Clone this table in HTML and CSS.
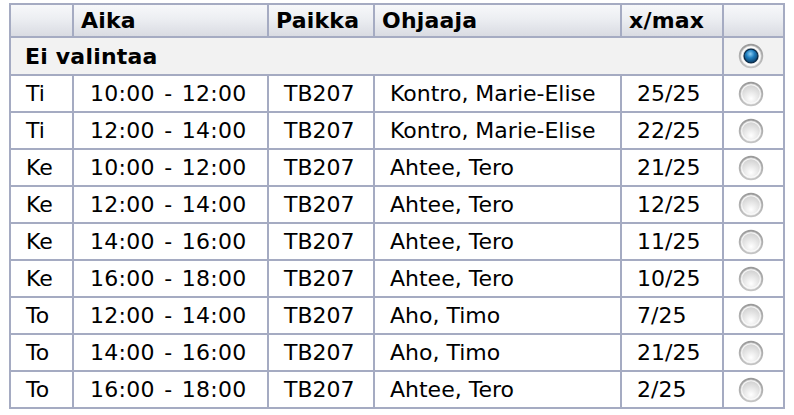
FILE: index.html
```html
<!DOCTYPE html>
<html lang="fi">
<head>
<meta charset="utf-8">
<title>Ryhmävalinta</title>
<link rel="stylesheet" href="styles.css">
</head>
<body>
<svg width="0" height="0" class="defs" aria-hidden="true">
  <defs>
    <radialGradient id="rfill" cx="50%" cy="70%" r="60%">
      <stop offset="0" stop-color="#ffffff"/>
      <stop offset="1" stop-color="#d0d0d0"/>
    </radialGradient>
    <linearGradient id="rring" x1="0" y1="0" x2="0" y2="1">
      <stop offset="0" stop-color="#9a9a9a"/>
      <stop offset="1" stop-color="#c4c4c4"/>
    </linearGradient>
    <radialGradient id="rdot" cx="45%" cy="35%" r="65%">
      <stop offset="0" stop-color="#8fd0f5"/>
      <stop offset="0.45" stop-color="#1f7fc0"/>
      <stop offset="1" stop-color="#0b3d66"/>
    </radialGradient>
  </defs>
</svg>
<table class="groups">
  <colgroup>
    <col class="c-day"><col class="c-time"><col class="c-room"><col class="c-teacher"><col class="c-count"><col class="c-radio">
  </colgroup>
  <thead>
    <tr><th></th><th>Aika</th><th>Paikka</th><th>Ohjaaja</th><th>x/max</th><th></th></tr>
  </thead>
  <tbody>
    <tr class="none"><td colspan="5">Ei valintaa</td><td class="radio"><svg class="rb" viewBox="0 0 24 24"><circle cx="12" cy="12" r="10.5" fill="url(#rfill)" stroke="url(#rring)" stroke-width="1.6"/><circle cx="12" cy="12" r="8.3" fill="none" stroke="#ffffff" stroke-width="1.2"/><circle cx="12" cy="12" r="6.4" fill="url(#rdot)" stroke="#0a2b48" stroke-width="1.2"/></svg></td></tr>
    <tr><td>Ti</td><td class="time">10:00 - 12:00</td><td>TB207</td><td>Kontro, Marie-Elise</td><td>25/25</td><td class="radio"><svg class="rb" viewBox="0 0 24 24"><circle cx="12" cy="12" r="10.5" fill="url(#rfill)" stroke="url(#rring)" stroke-width="1.6"/><circle cx="12" cy="12" r="8.6" fill="none" stroke="#ffffff" stroke-width="1" opacity="0.8"/></svg></td></tr>
    <tr><td>Ti</td><td class="time">12:00 - 14:00</td><td>TB207</td><td>Kontro, Marie-Elise</td><td>22/25</td><td class="radio"><svg class="rb" viewBox="0 0 24 24"><circle cx="12" cy="12" r="10.5" fill="url(#rfill)" stroke="url(#rring)" stroke-width="1.6"/><circle cx="12" cy="12" r="8.6" fill="none" stroke="#ffffff" stroke-width="1" opacity="0.8"/></svg></td></tr>
    <tr><td>Ke</td><td class="time">10:00 - 12:00</td><td>TB207</td><td>Ahtee, Tero</td><td>21/25</td><td class="radio"><svg class="rb" viewBox="0 0 24 24"><circle cx="12" cy="12" r="10.5" fill="url(#rfill)" stroke="url(#rring)" stroke-width="1.6"/><circle cx="12" cy="12" r="8.6" fill="none" stroke="#ffffff" stroke-width="1" opacity="0.8"/></svg></td></tr>
    <tr><td>Ke</td><td class="time">12:00 - 14:00</td><td>TB207</td><td>Ahtee, Tero</td><td>12/25</td><td class="radio"><svg class="rb" viewBox="0 0 24 24"><circle cx="12" cy="12" r="10.5" fill="url(#rfill)" stroke="url(#rring)" stroke-width="1.6"/><circle cx="12" cy="12" r="8.6" fill="none" stroke="#ffffff" stroke-width="1" opacity="0.8"/></svg></td></tr>
    <tr><td>Ke</td><td class="time">14:00 - 16:00</td><td>TB207</td><td>Ahtee, Tero</td><td>11/25</td><td class="radio"><svg class="rb" viewBox="0 0 24 24"><circle cx="12" cy="12" r="10.5" fill="url(#rfill)" stroke="url(#rring)" stroke-width="1.6"/><circle cx="12" cy="12" r="8.6" fill="none" stroke="#ffffff" stroke-width="1" opacity="0.8"/></svg></td></tr>
    <tr><td>Ke</td><td class="time">16:00 - 18:00</td><td>TB207</td><td>Ahtee, Tero</td><td>10/25</td><td class="radio"><svg class="rb" viewBox="0 0 24 24"><circle cx="12" cy="12" r="10.5" fill="url(#rfill)" stroke="url(#rring)" stroke-width="1.6"/><circle cx="12" cy="12" r="8.6" fill="none" stroke="#ffffff" stroke-width="1" opacity="0.8"/></svg></td></tr>
    <tr><td>To</td><td class="time">12:00 - 14:00</td><td>TB207</td><td>Aho, Timo</td><td>7/25</td><td class="radio"><svg class="rb" viewBox="0 0 24 24"><circle cx="12" cy="12" r="10.5" fill="url(#rfill)" stroke="url(#rring)" stroke-width="1.6"/><circle cx="12" cy="12" r="8.6" fill="none" stroke="#ffffff" stroke-width="1" opacity="0.8"/></svg></td></tr>
    <tr><td>To</td><td class="time">14:00 - 16:00</td><td>TB207</td><td>Aho, Timo</td><td>21/25</td><td class="radio"><svg class="rb" viewBox="0 0 24 24"><circle cx="12" cy="12" r="10.5" fill="url(#rfill)" stroke="url(#rring)" stroke-width="1.6"/><circle cx="12" cy="12" r="8.6" fill="none" stroke="#ffffff" stroke-width="1" opacity="0.8"/></svg></td></tr>
    <tr><td>To</td><td class="time">16:00 - 18:00</td><td>TB207</td><td>Ahtee, Tero</td><td>2/25</td><td class="radio"><svg class="rb" viewBox="0 0 24 24"><circle cx="12" cy="12" r="10.5" fill="url(#rfill)" stroke="url(#rring)" stroke-width="1.6"/><circle cx="12" cy="12" r="8.6" fill="none" stroke="#ffffff" stroke-width="1" opacity="0.8"/></svg></td></tr>
  </tbody>
</table>
</body>
</html>
```
FILE: styles.css
```css
html, body {
  margin: 0;
  padding: 0;
  background: #ffffff;
}
.defs {
  position: absolute;
  width: 0;
  height: 0;
}
.groups {
  margin: 3px 0 0 9px;
  width: 776px;
  table-layout: fixed;
  border-collapse: collapse;
  font-family: "DejaVu Sans", Verdana, sans-serif;
  font-size: 22px;
  line-height: 25px;
  color: #000000;
}
.c-day { width: 63px; }
.c-time { width: 195px; }
.c-room { width: 106px; }
.c-teacher { width: 247px; }
.c-count { width: 102px; }
.c-radio { width: 61px; }
.groups th,
.groups td {
  border: 2px solid #a5abc2;
  text-align: left;
  white-space: nowrap;
  overflow: hidden;
}
.groups th {
  font-weight: bold;
  padding: 3px 6px 3px 7px;
  letter-spacing: 0.2px;
  background: linear-gradient(to bottom, #f7f8fa 0%, #eceef2 45%, #d9dbe2 100%);
}
.groups td {
  padding: 5px 4px 5px 15px;
}
.groups td.time {
  padding-left: 16px;
  letter-spacing: 0.3px;
  word-spacing: 2px;
}
.groups tr.none td {
  background: #f2f2f2;
  font-weight: bold;
  letter-spacing: 0.2px;
  padding: 6px 4px 5px 14px;
}
.groups td.radio,
.groups tr.none td.radio {
  padding: 0;
  text-align: center;
  vertical-align: middle;
  line-height: 0;
}
.rb {
  width: 26px;
  height: 26px;
  margin-right: 6px;
}
```
